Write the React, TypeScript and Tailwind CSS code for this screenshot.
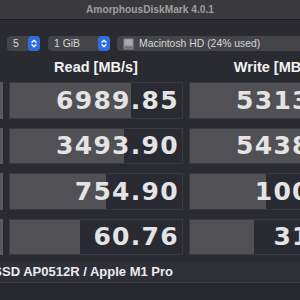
import React from 'react';

interface Row {
  read: string;
  readBar: number;
  write: string;
  writeBar: number;
}

const rows: Row[] = [
  { read: '6989.85', readBar: 121, write: '5313.07', writeBar: 118 },
  { read: '3493.90', readBar: 114, write: '5438.62', writeBar: 119 },
  { read: '754.90', readBar: 96, write: '100.69', writeBar: 76 },
  { read: '60.76', readBar: 70, write: '31.18', writeBar: 64 },
];

function Stepper() {
  return (
    <div className="h-full w-[12px] shrink-0 rounded-[4px] bg-[#2e6de0] flex items-center justify-center">
      <svg width="12" height="15" viewBox="0 0 12 15" fill="none" stroke="#ffffff" strokeWidth="1.3" strokeLinecap="round" strokeLinejoin="round">
        <path d="M4 6.2 L6 4.2 L8 6.2" />
        <path d="M4 8.8 L6 10.8 L8 8.8" />
      </svg>
    </div>
  );
}

function DiskIcon() {
  return (
    <svg width="11" height="12" viewBox="0 0 11 12" className="shrink-0">
      <rect x="0.5" y="0.5" width="10" height="11" rx="1.2" fill="#8e8e92" stroke="#6a6a6e" />
      <rect x="1.5" y="1.5" width="8" height="6" fill="#a4a4a8" />
      <rect x="1.5" y="8.5" width="8" height="2" fill="#6e6e72" />
      <line x1="2.5" y1="3" x2="8.5" y2="3" stroke="#bcbcc0" strokeWidth="0.6" />
      <line x1="2.5" y1="5" x2="8.5" y2="5" stroke="#bcbcc0" strokeWidth="0.6" />
    </svg>
  );
}

function Cell({ value, bar }: { value: string; bar: number }) {
  return (
    <div className="relative w-[174px] shrink-0 h-full border border-[#393941] bg-[#2a2a32] flex items-center justify-end pr-[3px]">
      <div className="absolute left-0 top-0 bottom-0 bg-[#515155]" style={{ width: bar }} />
      <span
        className="relative text-[25px] font-bold tracking-[1.3px] leading-none text-[#e4e4e4]"
        style={{ fontFamily: '"DejaVu Sans", sans-serif' }}
      >
        {value}
      </span>
    </div>
  );
}

export default function App() {
  return (
    <div
      className="w-[300px] h-[300px] overflow-hidden bg-[#2a2a31] flex flex-col"
      style={{ fontFamily: '"Liberation Sans", Arial, sans-serif' }}
    >
      {/* title bar */}
      <div className="h-[20px] shrink-0 bg-[#3a3a3d] border-b border-[#1e1e21] flex items-center justify-center">
        <span className="text-[10.2px] font-bold text-[#9e9ea0] whitespace-nowrap">AmorphousDiskMark 4.0.1</span>
      </div>

      {/* toolbar */}
      <div className="h-[37px] shrink-0 flex items-start">
        <div className="w-[3px] h-[23px] mt-[6px] bg-[#56565a] rounded-r-[2px]" />
        <div className="flex items-center h-[15px] mt-[16px] ml-[7px] gap-[8px] whitespace-nowrap text-[10.4px] text-[#d6d6d8]">
          <div className="w-[33px] h-full rounded-[4px] bg-[#454549] flex items-center shrink-0">
            <span className="pl-[6px] flex-1">5</span>
            <Stepper />
          </div>
          <div className="w-[62px] h-full rounded-[4px] bg-[#454549] flex items-center shrink-0">
            <span className="pl-[6px] flex-1">1 GiB</span>
            <Stepper />
          </div>
          <div className="w-[200px] h-full rounded-[4px] bg-[#454549] flex items-center shrink-0 ml-[-1px]">
            <div className="pl-[6px] flex items-center gap-[5px] flex-1">
              <DiskIcon />
              <span>Macintosh HD (24% used)</span>
            </div>
            <Stepper />
          </div>
        </div>
      </div>

      {/* column headers */}
      <div className="h-[25px] shrink-0 flex items-center text-[14.5px] font-bold text-[#f2f2f2] whitespace-nowrap">
        <div className="w-[3px] shrink-0" />
        <div className="w-[174px] ml-[6px] shrink-0 text-center pb-[4px]">Read [MB/s]</div>
        <div className="w-[174px] ml-[6px] shrink-0 text-center pb-[4px]">Write [MB/s]</div>
      </div>

      {/* results */}
      <div className="flex flex-col gap-[9px] shrink-0">
        {rows.map((r, i) => (
          <div key={i} className="h-[36.5px] flex gap-[6px]">
            <div className="w-[3px] shrink-0 h-full bg-[#59595d]" />
            <Cell value={r.read} bar={r.readBar} />
            <Cell value={r.write} bar={r.writeBar} />
          </div>
        ))}
      </div>

      {/* footer */}
      <div className="mt-[7px] h-[21px] shrink-0 bg-[#2f2f37] border-b border-[#3b3b42] flex items-center">
        <div className="w-[173px] shrink-0 flex justify-end">
          <span className="text-[13px] font-bold text-[#ececee] whitespace-nowrap shrink-0">APPLE SSD AP0512R / Apple M1 Pro</span>
        </div>
      </div>
      <div className="flex-1 bg-[#27272e]" />
    </div>
  );
}
